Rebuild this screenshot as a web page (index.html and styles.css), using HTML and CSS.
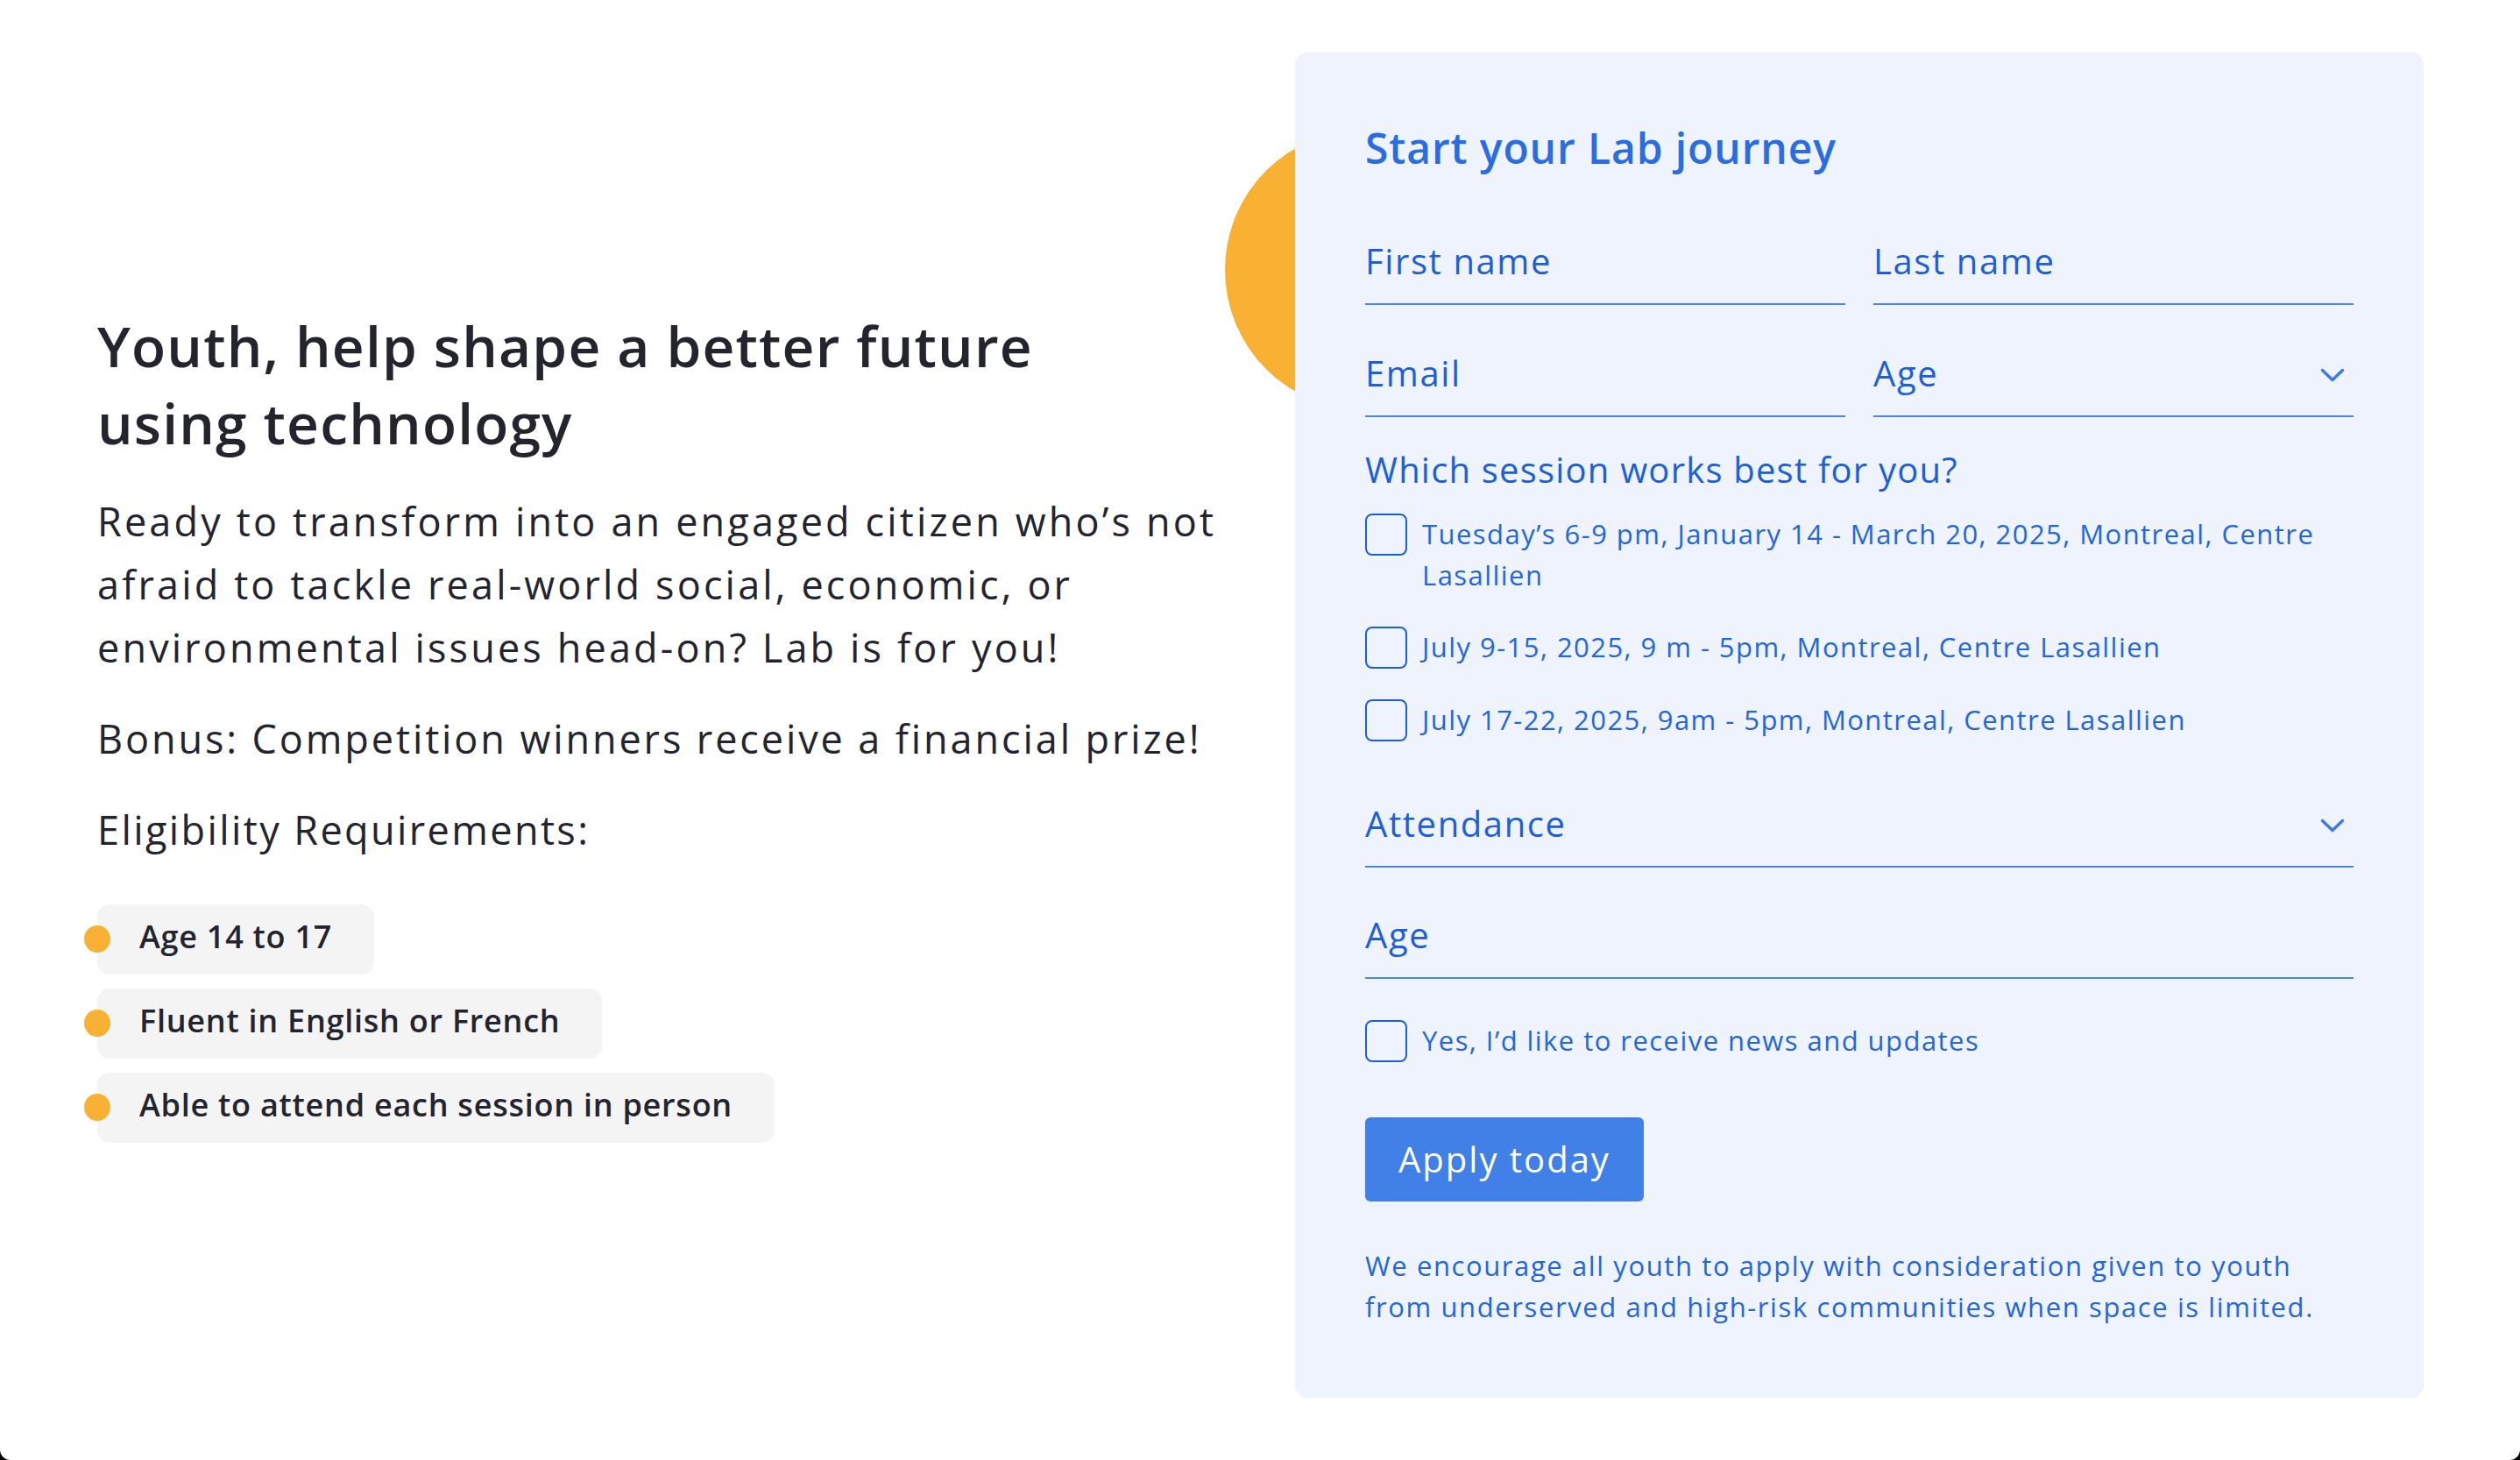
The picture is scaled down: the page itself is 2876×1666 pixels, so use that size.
FILE: index.html
```html
<!DOCTYPE html>
<html lang="en">
<head>
<meta charset="utf-8">
<title>Start your Lab journey</title>
<link rel="stylesheet" href="styles.css">
</head>
<body>
<main class="page">
  <section class="intro">
    <h1 class="intro-title">Youth, help shape a better future using technology</h1>
    <p class="intro-text intro-lead">Ready to transform into an engaged citizen who’s not afraid to tackle real-world social, economic, or environmental issues head-on? Lab is for you!</p>
    <p class="intro-text intro-bonus">Bonus: Competition winners receive a financial prize!</p>
    <p class="intro-text intro-elig">Eligibility Requirements:</p>
    <ul class="reqs">
      <li class="req">Age 14 to 17</li>
      <li class="req">Fluent in English or French</li>
      <li class="req">Able to attend each session in person</li>
    </ul>
  </section>

  <div class="form-wrap">
    <span class="blob"></span>
    <form class="card">
      <h2 class="card-title">Start your Lab journey</h2>

      <div class="row">
        <div class="field"><span class="field-label">First name</span></div>
        <div class="field"><span class="field-label">Last name</span></div>
      </div>
      <div class="row row-next">
        <div class="field"><span class="field-label">Email</span></div>
        <div class="field field-select"><span class="field-label">Age</span>
          <svg class="chev" viewBox="0 0 28 16" width="28" height="16"><path d="M2.5 2.5 L14 13.5 L25.5 2.5" fill="none" stroke="#3c7be6" stroke-width="3.5" stroke-linecap="round" stroke-linejoin="round"/></svg>
        </div>
      </div>

      <p class="question">Which session works best for you?</p>
      <div class="checks">
        <div class="check"><span class="box"></span><span class="check-text">Tuesday’s 6-9 pm, January 14 - March 20, 2025, Montreal, Centre Lasallien</span></div>
        <div class="check"><span class="box"></span><span class="check-text">July 9-15, 2025, 9 m - 5pm, Montreal, Centre Lasallien</span></div>
        <div class="check"><span class="box"></span><span class="check-text">July 17-22, 2025, 9am - 5pm, Montreal, Centre Lasallien</span></div>
      </div>

      <div class="field field-select field-wide field-attend"><span class="field-label">Attendance</span>
        <svg class="chev" viewBox="0 0 28 16" width="28" height="16"><path d="M2.5 2.5 L14 13.5 L25.5 2.5" fill="none" stroke="#3c7be6" stroke-width="3.5" stroke-linecap="round" stroke-linejoin="round"/></svg>
      </div>
      <div class="field field-wide field-age"><span class="field-label">Age</span></div>

      <div class="check check-news"><span class="box"></span><span class="check-text">Yes, I’d like to receive news and updates</span></div>

      <button type="button" class="apply">Apply today</button>

      <p class="note">We encourage all youth to apply with consideration given to youth from underserved and high-risk communities when space is limited.</p>
    </form>
  </div>
</main>
</body>
</html>
```

FILE: styles.css
```css
html {
  background: #000;
}

body {
  margin: 0;
  height: 1666px;
  background: #fff;
  border-radius: 0 0 12px 12px;
  font-family: "Open Sans", "Noto Sans", sans-serif;
  color: #24242e;
}

.page {
  display: flex;
  align-items: center;
  gap: 80px;
  padding: 59px 110px 71px 111px;
  box-sizing: border-box;
  height: 100%;
}

/* ---------- left column ---------- */
.intro {
  flex: 1;
  min-width: 0;
}

.intro-title {
  margin: 0 0 32px;
  max-width: 1160px;
  font-size: 64px;
  line-height: 88px;
  font-weight: 600;
  letter-spacing: 1.2px;
  color: #24242e;
}

.intro-text {
  margin: 0 0 32px;
  font-size: 45px;
  line-height: 72px;
  font-weight: 400;
  letter-spacing: 2.75px;
  color: #24242e;
}

.intro-lead {
  letter-spacing: 3.15px;
}

.intro-bonus {
  letter-spacing: 2.9px;
}

.intro-elig {
  letter-spacing: 2.4px;
}

.reqs {
  list-style: none;
  margin: 49px 0 0;
  padding: 0;
  display: flex;
  flex-direction: column;
  align-items: flex-start;
  gap: 16px;
}

.req {
  position: relative;
  height: 80px;
  box-sizing: border-box;
  padding: 0 48px 6px;
  line-height: 74px;
  font-size: 36px;
  font-weight: 600;
  letter-spacing: 0.75px;
  background: #f4f4f5;
  border-radius: 14px;
  color: #24242e;
}

.req::before {
  content: "";
  position: absolute;
  left: -15px;
  top: 24px;
  width: 30px;
  height: 31px;
  border-radius: 50%;
  background: #f8b133;
}

/* ---------- form card ---------- */
.form-wrap {
  position: relative;
  width: 1288px;
  flex: none;
}

.blob {
  position: absolute;
  left: -80px;
  top: 88px;
  width: 320px;
  height: 320px;
  border-radius: 50%;
  background: #f9b134;
}

.card {
  position: relative;
  z-index: 1;
  display: flex;
  flex-direction: column;
  padding: 80px;
  background: #eef3fd;
  border-radius: 14px;
  color: #1d5fd8;
}

.card-title {
  margin: 0;
  font-size: 48px;
  line-height: 58px;
  font-weight: 600;
  letter-spacing: 0.9px;
  color: #2a6de0;
}

.row {
  display: grid;
  grid-template-columns: 1fr 1fr;
  gap: 32px;
  margin-top: 70px;
}

.row-next {
  margin-top: 48px;
}

.field {
  position: relative;
  padding-bottom: 18px;
  border-bottom: 2px solid #4a87e9;
  font-size: 40px;
  line-height: 60px;
  letter-spacing: 1.6px;
  color: #1d5fd8;
}

.chev {
  position: absolute;
  right: 10px;
  top: 24px;
}

.question {
  margin: 30px 0 0;
  font-size: 40px;
  line-height: 60px;
  letter-spacing: 1.2px;
  color: #1d5fd8;
}

.checks {
  display: flex;
  flex-direction: column;
  gap: 35px;
  margin-top: 20px;
}

.check {
  display: flex;
  align-items: flex-start;
  gap: 17px;
}

.box {
  flex: none;
  width: 48px;
  height: 48px;
  box-sizing: border-box;
  border: 2px solid #1d5fd8;
  border-radius: 8px;
}

.check-text {
  font-size: 31px;
  line-height: 47px;
  letter-spacing: 1.45px;
  color: #2466dc;
}

.field-attend {
  margin-top: 64px;
}

.field-age {
  margin-top: 47px;
}

.check-news {
  margin-top: 47px;
}

.apply {
  align-self: flex-start;
  margin-top: 63px;
  width: 318px;
  height: 96px;
  padding: 0;
  border: 0;
  border-radius: 6px;
  background: #4180e6;
  color: #fff;
  font-family: inherit;
  font-size: 40px;
  font-weight: 400;
  letter-spacing: 2px;
  cursor: pointer;
}

.note {
  margin: 50px 0 0;
  font-size: 31px;
  line-height: 47px;
  letter-spacing: 1.6px;
  color: #2466dc;
}
```
